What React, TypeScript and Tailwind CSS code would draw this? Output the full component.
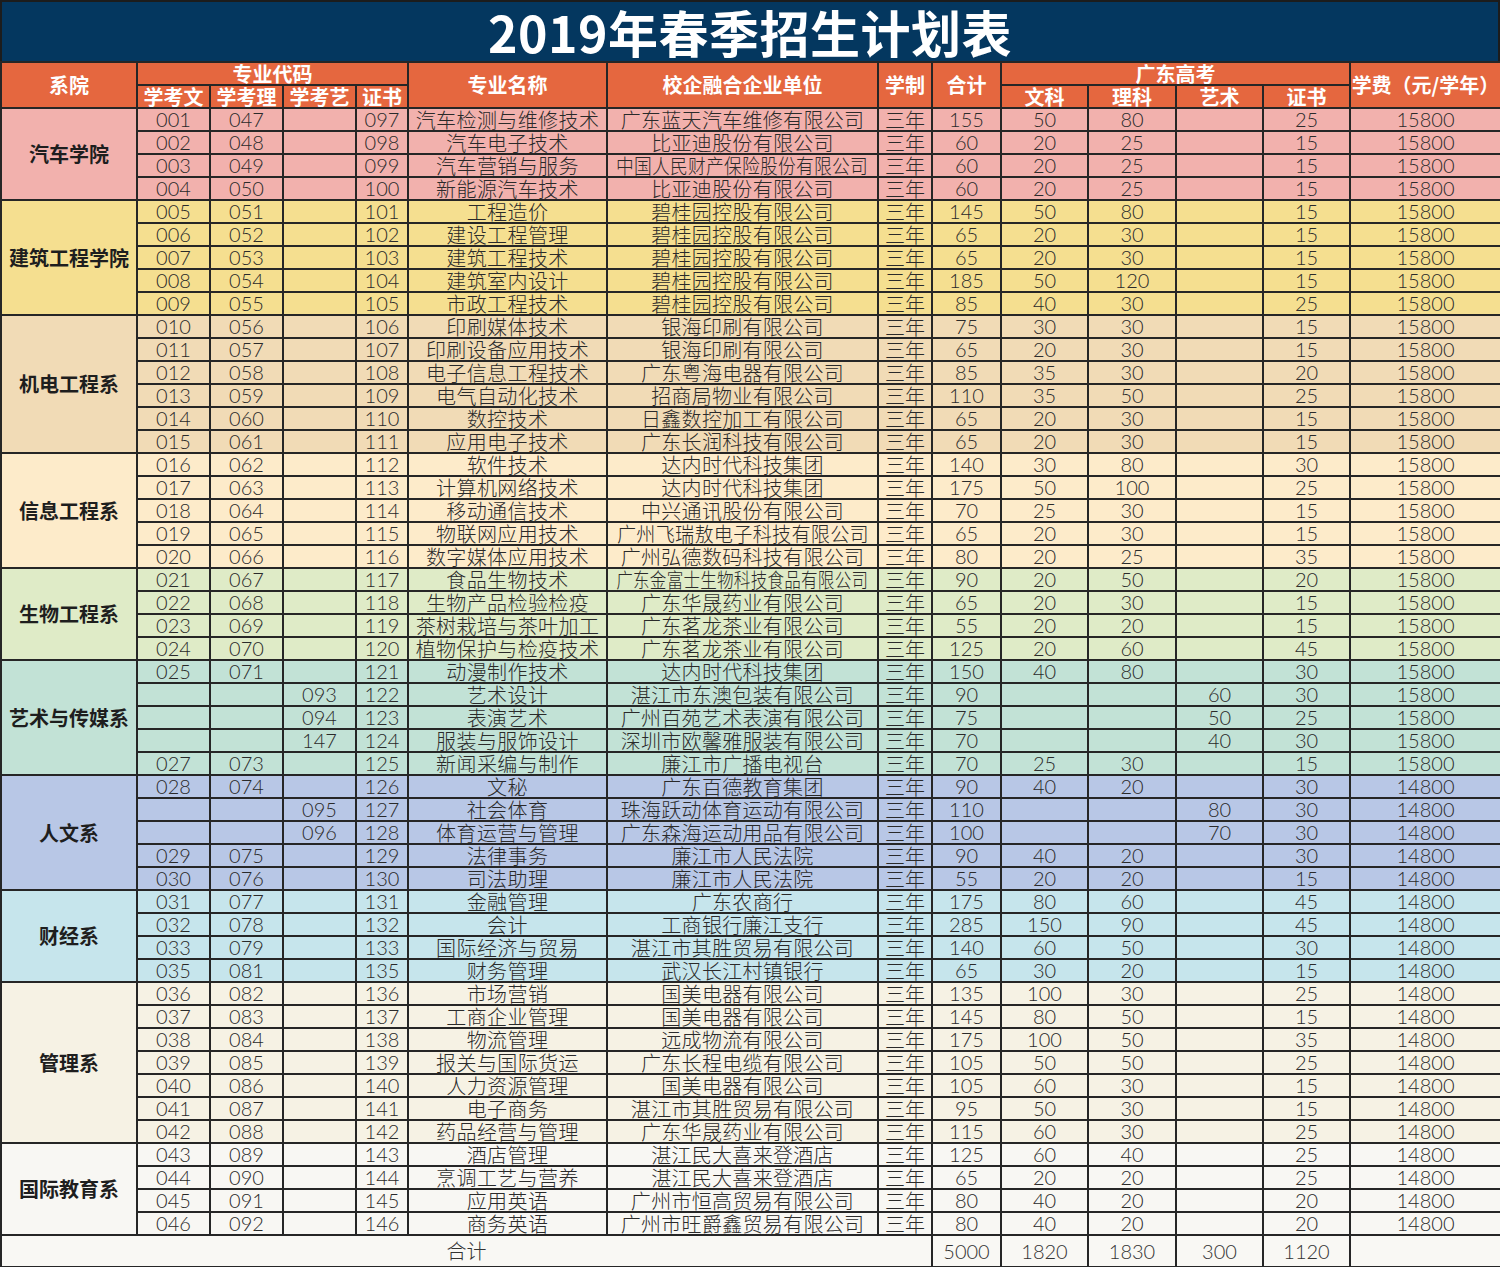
import React from "react";

type Row = [string, string, string, string, string, string, string, string, string, string, string, string];

interface Dept {
  name: string;
  bg: string;
  rows: Row[];
}

const depts: Dept[] = [
  {
    name: "汽车学院",
    bg: "bg-[#f2b1ad]",
    rows: [
      ["001", "047", "", "097", "汽车检测与维修技术", "广东蓝天汽车维修有限公司", "155", "50", "80", "", "25", "15800"],
      ["002", "048", "", "098", "汽车电子技术", "比亚迪股份有限公司", "60", "20", "25", "", "15", "15800"],
      ["003", "049", "", "099", "汽车营销与服务", "中国人民财产保险股份有限公司", "60", "20", "25", "", "15", "15800"],
      ["004", "050", "", "100", "新能源汽车技术", "比亚迪股份有限公司", "60", "20", "25", "", "15", "15800"],
    ],
  },
  {
    name: "建筑工程学院",
    bg: "bg-[#f5df90]",
    rows: [
      ["005", "051", "", "101", "工程造价", "碧桂园控股有限公司", "145", "50", "80", "", "15", "15800"],
      ["006", "052", "", "102", "建设工程管理", "碧桂园控股有限公司", "65", "20", "30", "", "15", "15800"],
      ["007", "053", "", "103", "建筑工程技术", "碧桂园控股有限公司", "65", "20", "30", "", "15", "15800"],
      ["008", "054", "", "104", "建筑室内设计", "碧桂园控股有限公司", "185", "50", "120", "", "15", "15800"],
      ["009", "055", "", "105", "市政工程技术", "碧桂园控股有限公司", "85", "40", "30", "", "25", "15800"],
    ],
  },
  {
    name: "机电工程系",
    bg: "bg-[#f1dbb6]",
    rows: [
      ["010", "056", "", "106", "印刷媒体技术", "银海印刷有限公司", "75", "30", "30", "", "15", "15800"],
      ["011", "057", "", "107", "印刷设备应用技术", "银海印刷有限公司", "65", "20", "30", "", "15", "15800"],
      ["012", "058", "", "108", "电子信息工程技术", "广东粤海电器有限公司", "85", "35", "30", "", "20", "15800"],
      ["013", "059", "", "109", "电气自动化技术", "招商局物业有限公司", "110", "35", "50", "", "25", "15800"],
      ["014", "060", "", "110", "数控技术", "日鑫数控加工有限公司", "65", "20", "30", "", "15", "15800"],
      ["015", "061", "", "111", "应用电子技术", "广东长润科技有限公司", "65", "20", "30", "", "15", "15800"],
    ],
  },
  {
    name: "信息工程系",
    bg: "bg-[#fdebca]",
    rows: [
      ["016", "062", "", "112", "软件技术", "达内时代科技集团", "140", "30", "80", "", "30", "15800"],
      ["017", "063", "", "113", "计算机网络技术", "达内时代科技集团", "175", "50", "100", "", "25", "15800"],
      ["018", "064", "", "114", "移动通信技术", "中兴通讯股份有限公司", "70", "25", "30", "", "15", "15800"],
      ["019", "065", "", "115", "物联网应用技术", "广州飞瑞敖电子科技有限公司", "65", "20", "30", "", "15", "15800"],
      ["020", "066", "", "116", "数字媒体应用技术", "广州弘德数码科技有限公司", "80", "20", "25", "", "35", "15800"],
    ],
  },
  {
    name: "生物工程系",
    bg: "bg-[#dfebc7]",
    rows: [
      ["021", "067", "", "117", "食品生物技术", "广东金富士生物科技食品有限公司", "90", "20", "50", "", "20", "15800"],
      ["022", "068", "", "118", "生物产品检验检疫", "广东华晟药业有限公司", "65", "20", "30", "", "15", "15800"],
      ["023", "069", "", "119", "茶树栽培与茶叶加工", "广东茗龙茶业有限公司", "55", "20", "20", "", "15", "15800"],
      ["024", "070", "", "120", "植物保护与检疫技术", "广东茗龙茶业有限公司", "125", "20", "60", "", "45", "15800"],
    ],
  },
  {
    name: "艺术与传媒系",
    bg: "bg-[#c2e2d6]",
    rows: [
      ["025", "071", "", "121", "动漫制作技术", "达内时代科技集团", "150", "40", "80", "", "30", "15800"],
      ["", "", "093", "122", "艺术设计", "湛江市东澳包装有限公司", "90", "", "", "60", "30", "15800"],
      ["", "", "094", "123", "表演艺术", "广州百苑艺术表演有限公司", "75", "", "", "50", "25", "15800"],
      ["", "", "147", "124", "服装与服饰设计", "深圳市欧馨雅服装有限公司", "70", "", "", "40", "30", "15800"],
      ["027", "073", "", "125", "新闻采编与制作", "廉江市广播电视台", "70", "25", "30", "", "15", "15800"],
    ],
  },
  {
    name: "人文系",
    bg: "bg-[#b8c7e6]",
    rows: [
      ["028", "074", "", "126", "文秘", "广东百德教育集团", "90", "40", "20", "", "30", "14800"],
      ["", "", "095", "127", "社会体育", "珠海跃动体育运动有限公司", "110", "", "", "80", "30", "14800"],
      ["", "", "096", "128", "体育运营与管理", "广东森海运动用品有限公司", "100", "", "", "70", "30", "14800"],
      ["029", "075", "", "129", "法律事务", "廉江市人民法院", "90", "40", "20", "", "30", "14800"],
      ["030", "076", "", "130", "司法助理", "廉江市人民法院", "55", "20", "20", "", "15", "14800"],
    ],
  },
  {
    name: "财经系",
    bg: "bg-[#c6e5ec]",
    rows: [
      ["031", "077", "", "131", "金融管理", "广东农商行", "175", "80", "60", "", "45", "14800"],
      ["032", "078", "", "132", "会计", "工商银行廉江支行", "285", "150", "90", "", "45", "14800"],
      ["033", "079", "", "133", "国际经济与贸易", "湛江市其胜贸易有限公司", "140", "60", "50", "", "30", "14800"],
      ["035", "081", "", "135", "财务管理", "武汉长江村镇银行", "65", "30", "20", "", "15", "14800"],
    ],
  },
  {
    name: "管理系",
    bg: "bg-[#f6f2e4]",
    rows: [
      ["036", "082", "", "136", "市场营销", "国美电器有限公司", "135", "100", "30", "", "25", "14800"],
      ["037", "083", "", "137", "工商企业管理", "国美电器有限公司", "145", "80", "50", "", "15", "14800"],
      ["038", "084", "", "138", "物流管理", "远成物流有限公司", "175", "100", "50", "", "35", "14800"],
      ["039", "085", "", "139", "报关与国际货运", "广东长程电缆有限公司", "105", "50", "50", "", "25", "14800"],
      ["040", "086", "", "140", "人力资源管理", "国美电器有限公司", "105", "60", "30", "", "15", "14800"],
      ["041", "087", "", "141", "电子商务", "湛江市其胜贸易有限公司", "95", "50", "30", "", "15", "14800"],
      ["042", "088", "", "142", "药品经营与管理", "广东华晟药业有限公司", "115", "60", "30", "", "25", "14800"],
    ],
  },
  {
    name: "国际教育系",
    bg: "bg-[#f8f7f3]",
    rows: [
      ["043", "089", "", "143", "酒店管理", "湛江民大喜来登酒店", "125", "60", "40", "", "25", "14800"],
      ["044", "090", "", "144", "烹调工艺与营养", "湛江民大喜来登酒店", "65", "20", "20", "", "25", "14800"],
      ["045", "091", "", "145", "应用英语", "广州市恒高贸易有限公司", "80", "40", "20", "", "20", "14800"],
      ["046", "092", "", "146", "商务英语", "广州市旺爵鑫贸易有限公司", "80", "40", "20", "", "20", "14800"],
    ],
  },
];

const colWidths = [136, 73, 73, 73, 52, 199, 271, 54, 69, 87, 88, 87, 87, 151];

const hd = "border-2 border-[#262626] bg-[#e5673f] text-white font-bold text-[20px] leading-[20px] text-center p-0 align-bottom";
const td = "border-2 border-[#262626] h-[23px] p-0 text-center align-bottom text-[20px] leading-[21px] text-[#2a2a2a] whitespace-nowrap overflow-hidden";
const num = "font-['Lato','Noto_Sans_CJK_SC',sans-serif] font-light";
const cjk = "font-['Noto_Sans_CJK_SC',sans-serif] font-light";

function Fit({ text, max, px }: { text: string; max: number; px: number }) {
  const w = text.length * px;
  const s = w > max ? max / w : 1;
  return (
    <span className="inline-block origin-center" style={{ transform: `scaleX(${s})`, width: w, marginLeft: -(w - Math.min(w, max)) / 2, marginRight: -(w - Math.min(w, max)) / 2 }}>
      {text}
    </span>
  );
}

export default function App() {
  return (
    <div className="w-[1500px] h-[1267px] bg-white font-['Noto_Sans_CJK_SC','Noto_Sans',sans-serif] overflow-hidden">
      <div className="h-[61px] bg-[#04375f] border-2 border-b-0 border-[#1c1c1c] flex items-center justify-center">
        <h1 className="text-white font-bold text-[50px] leading-none tracking-[0.5px] pb-[2px]">2019年春季招生计划表</h1>
      </div>
      <table className="w-[1500px] table-fixed border-collapse border-2 border-[#262626]">
        <colgroup>
          {colWidths.map((w, i) => (
            <col key={i} style={{ width: w }} />
          ))}
        </colgroup>
        <thead>
          <tr>
            <th rowSpan={2} className={`${hd} align-middle`}>系院</th>
            <th colSpan={4} className={`${hd} h-[23px]`}>专业代码</th>
            <th rowSpan={2} className={`${hd} align-middle`}>专业名称</th>
            <th rowSpan={2} className={`${hd} align-middle`}>校企融合企业单位</th>
            <th rowSpan={2} className={`${hd} align-middle`}>学制</th>
            <th rowSpan={2} className={`${hd} align-middle`}>合计</th>
            <th colSpan={4} className={`${hd} h-[23px]`}>广东高考</th>
            <th rowSpan={2} className={`${hd} align-middle whitespace-nowrap`}>学费（元/学年）</th>
          </tr>
          <tr>
            <th className={`${hd} h-[23px]`}>学考文</th>
            <th className={`${hd} h-[23px]`}>学考理</th>
            <th className={`${hd} h-[23px]`}>学考艺</th>
            <th className={`${hd} h-[23px]`}>证书</th>
            <th className={`${hd} h-[23px]`}>文科</th>
            <th className={`${hd} h-[23px]`}>理科</th>
            <th className={`${hd} h-[23px]`}>艺术</th>
            <th className={`${hd} h-[23px]`}>证书</th>
          </tr>
        </thead>
        <tbody>
          {depts.map((d) =>
            d.rows.map((r, ri) => (
              <tr key={d.name + ri} className={d.bg}>
                {ri === 0 && (
                  <td rowSpan={d.rows.length} className="border-2 border-[#262626] p-0 text-center align-middle text-[20px] font-bold text-[#1e1e1e] whitespace-nowrap">
                    {d.name}
                  </td>
                )}
                <td className={`${td} ${num}`}>{r[0]}</td>
                <td className={`${td} ${num}`}>{r[1]}</td>
                <td className={`${td} ${num}`}>{r[2]}</td>
                <td className={`${td} ${num}`}>{r[3]}</td>
                <td className={`${td} ${cjk} tracking-[0.4px]`}>
                  <Fit text={r[4]} max={190} px={20.4} />
                </td>
                <td className={`${td} ${cjk} tracking-[0.3px]`}>
                  <Fit text={r[5]} max={252} px={20.3} />
                </td>
                <td className={`${td} ${cjk}`}>三年</td>
                <td className={`${td} ${num}`}>{r[6]}</td>
                <td className={`${td} ${num}`}>{r[7]}</td>
                <td className={`${td} ${num}`}>{r[8]}</td>
                <td className={`${td} ${num}`}>{r[9]}</td>
                <td className={`${td} ${num}`}>{r[10]}</td>
                <td className={`${td} ${num}`}>{r[11]}</td>
              </tr>
            ))
          )}
          <tr className="bg-[#f9f8f4]">
            <td colSpan={8} className={`border-2 border-[#262626] h-[31px] p-0 text-center align-middle text-[20px] text-[#333] ${cjk}`}>合计</td>
            <td className={`border-2 border-[#262626] text-center align-middle text-[20px] text-[#333] ${num}`}>5000</td>
            <td className={`border-2 border-[#262626] text-center align-middle text-[20px] text-[#333] ${num}`}>1820</td>
            <td className={`border-2 border-[#262626] text-center align-middle text-[20px] text-[#333] ${num}`}>1830</td>
            <td className={`border-2 border-[#262626] text-center align-middle text-[20px] text-[#333] ${num}`}>300</td>
            <td className={`border-2 border-[#262626] text-center align-middle text-[20px] text-[#333] ${num}`}>1120</td>
            <td className="border-2 border-[#262626]"></td>
          </tr>
        </tbody>
      </table>
    </div>
  );
}
